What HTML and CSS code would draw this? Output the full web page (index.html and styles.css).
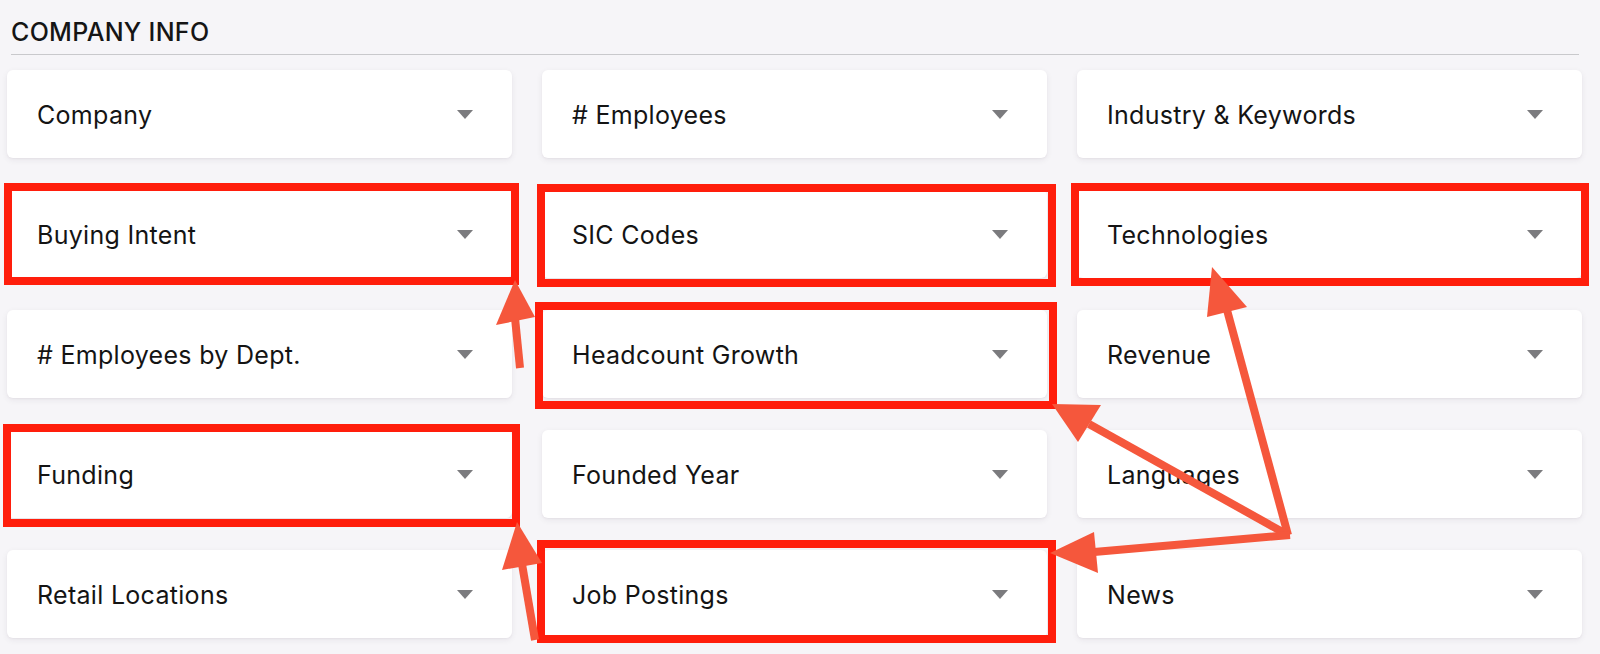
FILE: index.html
```html
<!DOCTYPE html>
<html lang="en">
<head>
<meta charset="utf-8">
<title>Company Info</title>
<link rel="stylesheet" href="styles.css">
</head>
<body>
<div class="page">
  <div class="section-head">
    <h2 class="section-title">COMPANY INFO</h2>
  </div>
  <div class="grid">
    <div class="card"><span class="label">Company</span><svg class="caret" viewBox="0 0 16 9"><polygon points="0,0 16,0 8,9"/></svg></div>
    <div class="card"><span class="label"># Employees</span><svg class="caret" viewBox="0 0 16 9"><polygon points="0,0 16,0 8,9"/></svg></div>
    <div class="card"><span class="label">Industry &amp; Keywords</span><svg class="caret" viewBox="0 0 16 9"><polygon points="0,0 16,0 8,9"/></svg></div>

    <div class="card"><span class="label">Buying Intent</span><svg class="caret" viewBox="0 0 16 9"><polygon points="0,0 16,0 8,9"/></svg></div>
    <div class="card"><span class="label">SIC Codes</span><svg class="caret" viewBox="0 0 16 9"><polygon points="0,0 16,0 8,9"/></svg></div>
    <div class="card"><span class="label">Technologies</span><svg class="caret" viewBox="0 0 16 9"><polygon points="0,0 16,0 8,9"/></svg></div>

    <div class="card"><span class="label"># Employees by Dept.</span><svg class="caret" viewBox="0 0 16 9"><polygon points="0,0 16,0 8,9"/></svg></div>
    <div class="card"><span class="label">Headcount Growth</span><svg class="caret" viewBox="0 0 16 9"><polygon points="0,0 16,0 8,9"/></svg></div>
    <div class="card"><span class="label">Revenue</span><svg class="caret" viewBox="0 0 16 9"><polygon points="0,0 16,0 8,9"/></svg></div>

    <div class="card"><span class="label">Funding</span><svg class="caret" viewBox="0 0 16 9"><polygon points="0,0 16,0 8,9"/></svg></div>
    <div class="card"><span class="label">Founded Year</span><svg class="caret" viewBox="0 0 16 9"><polygon points="0,0 16,0 8,9"/></svg></div>
    <div class="card"><span class="label">Languages</span><svg class="caret" viewBox="0 0 16 9"><polygon points="0,0 16,0 8,9"/></svg></div>

    <div class="card"><span class="label">Retail Locations</span><svg class="caret" viewBox="0 0 16 9"><polygon points="0,0 16,0 8,9"/></svg></div>
    <div class="card"><span class="label">Job Postings</span><svg class="caret" viewBox="0 0 16 9"><polygon points="0,0 16,0 8,9"/></svg></div>
    <div class="card"><span class="label">News</span><svg class="caret" viewBox="0 0 16 9"><polygon points="0,0 16,0 8,9"/></svg></div>
  </div>

  <svg class="annotations" viewBox="0 0 1600 654" width="1600" height="654">
    <g class="boxes">
      <rect x="8" y="187" width="507" height="94"/>
      <rect x="541" y="188" width="511" height="95"/>
      <rect x="1075" y="187" width="510" height="95"/>
      <rect x="539" y="306" width="514" height="99"/>
      <rect x="7" y="428" width="509" height="95"/>
      <rect x="541" y="544" width="511" height="95"/>
    </g>
    <g class="arrows">
      <line x1="520" y1="368" x2="515" y2="318"/>
      <polygon points="515,280 496,325 535,317"/>
      <line x1="535" y1="640" x2="522" y2="564"/>
      <polygon points="517,522 502,570 542,563"/>
      <line x1="1288" y1="535" x2="1227" y2="310"/>
      <polygon points="1212,267 1207,317 1247,307"/>
      <line x1="1288" y1="535" x2="1089" y2="424"/>
      <polygon points="1052,404 1078,442 1101,405"/>
      <line x1="1290" y1="535" x2="1094" y2="552"/>
      <polygon points="1050,553 1094,532 1098,573"/>
    </g>
  </svg>
</div>
</body>
</html>
```

FILE: styles.css
```css
* {
  box-sizing: border-box;
}

html, body {
  margin: 0;
  padding: 0;
  background: #f6f5f8;
}

body {
  font-family: Inter, "Noto Sans", "Liberation Sans", sans-serif;
  color: #141414;
  width: 1600px;
  height: 654px;
  overflow: hidden;
}

.page {
  position: relative;
  width: 1600px;
  height: 654px;
  padding: 0 18px 0 7px;
}

.section-head {
  margin-left: 4px;
  width: 1568px;
  padding-top: 18px;
  padding-bottom: 7px;
  border-bottom: 1px solid #c9c9cc;
}

.section-title {
  margin: 0;
  font-size: 25px;
  line-height: 29px;
  font-weight: 500;
  letter-spacing: 0.3px;
  color: #151515;
}

.grid {
  margin-top: 15px;
  display: grid;
  grid-template-columns: 505px 505px 505px;
  grid-auto-rows: 88px;
  column-gap: 30px;
  row-gap: 32px;
}

.card {
  background: #ffffff;
  border-radius: 6px;
  box-shadow: 0 2px 6px rgba(40, 30, 60, 0.07), 0 1px 2px rgba(40, 30, 60, 0.04);
  display: flex;
  align-items: center;
  justify-content: space-between;
  padding: 2px 39px 0 30px;
}

.label {
  font-size: 25px;
  letter-spacing: 0.3px;
  color: #141414;
}

.caret {
  width: 16px;
  height: 9px;
  fill: #7b7b7e;
  margin-top: -2px;
}

.annotations {
  position: absolute;
  top: 0;
  left: 0;
  pointer-events: none;
}

.boxes rect {
  fill: none;
  stroke: #ff1e0c;
  stroke-width: 8;
}

.arrows line {
  stroke: #f5573c;
  stroke-width: 8;
}

.arrows polygon {
  fill: #f5573c;
}
```
